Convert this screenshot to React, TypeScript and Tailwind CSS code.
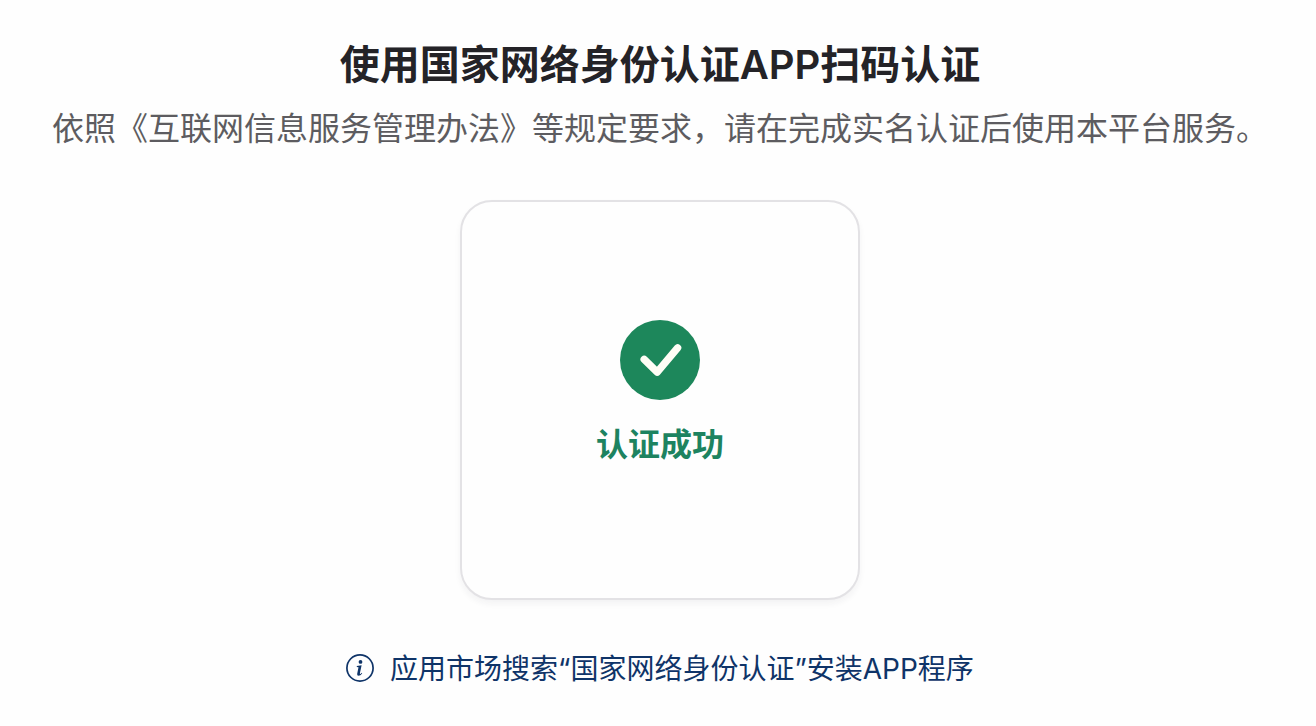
function SuccessIcon() {
  return (
    <svg viewBox="0 0 80 80" className="w-20 h-20" aria-hidden="true">
      <circle cx="40" cy="40" r="40" fill="#1d875b" />
      <path
        d="M24.2 39.4 L37.2 52.2 L57.6 27.8"
        fill="none"
        stroke="#fffef6"
        strokeWidth="7.4"
        strokeLinecap="round"
        strokeLinejoin="round"
      />
    </svg>
  )
}

function InfoIcon() {
  return (
    <svg viewBox="0 0 28 28" className="mt-1.5 w-7 h-7 shrink-0" aria-hidden="true">
      <circle cx="14" cy="14" r="13.1" fill="none" stroke="#0f3468" strokeWidth="1.7" />
      <circle cx="14.5" cy="7.9" r="1.9" fill="#0f3468" />
      <path
        d="M10.8 12 L15.6 11.2 L13.9 19.3 Q13.8 20.3 14.5 19.9 L15.8 18.8 L16.2 19.5 Q14.4 21.8 12.5 21.8 Q10.8 21.6 11.2 19.7 L12.5 13.3 L10.8 13 Z"
        fill="#0f3468"
      />
    </svg>
  )
}

export default function App() {
  return (
    <main className="min-h-screen bg-[#fefefe] pl-1 pt-10 flex flex-col items-center font-['Inter','Noto_Sans_CJK_SC',sans-serif]">
      <h1 className="text-[40px] leading-[50px] font-semibold text-[#242327] text-center">
        使用国家网络身份认证APP扫码认证
      </h1>
      <p className="mt-4 text-[32px] leading-[46px] text-[#5d5c60] text-center">
        依照《互联网信息服务管理办法》等规定要求，请在完成实名认证后使用本平台服务。
      </p>

      {/* Status card */}
      <section className="mt-12 w-100 h-100 pb-2.5 flex flex-col items-center justify-center rounded-[32px] border-2 border-[#e3e2e5] bg-[#fefefe] shadow-[0_4px_6px_rgba(40,30,60,0.05)]">
        <SuccessIcon />
        <p className="mt-5 text-[32px] leading-[50px] font-semibold text-[#1d8360]">认证成功</p>
      </section>

      {/* Install hint */}
      <div className="mt-12 flex items-start gap-4 text-[#0f3468]">
        <InfoIcon />
        <span className="text-[28px] leading-[42px]">应用市场搜索“国家网络身份认证”安装APP程序</span>
      </div>
    </main>
  )
}
